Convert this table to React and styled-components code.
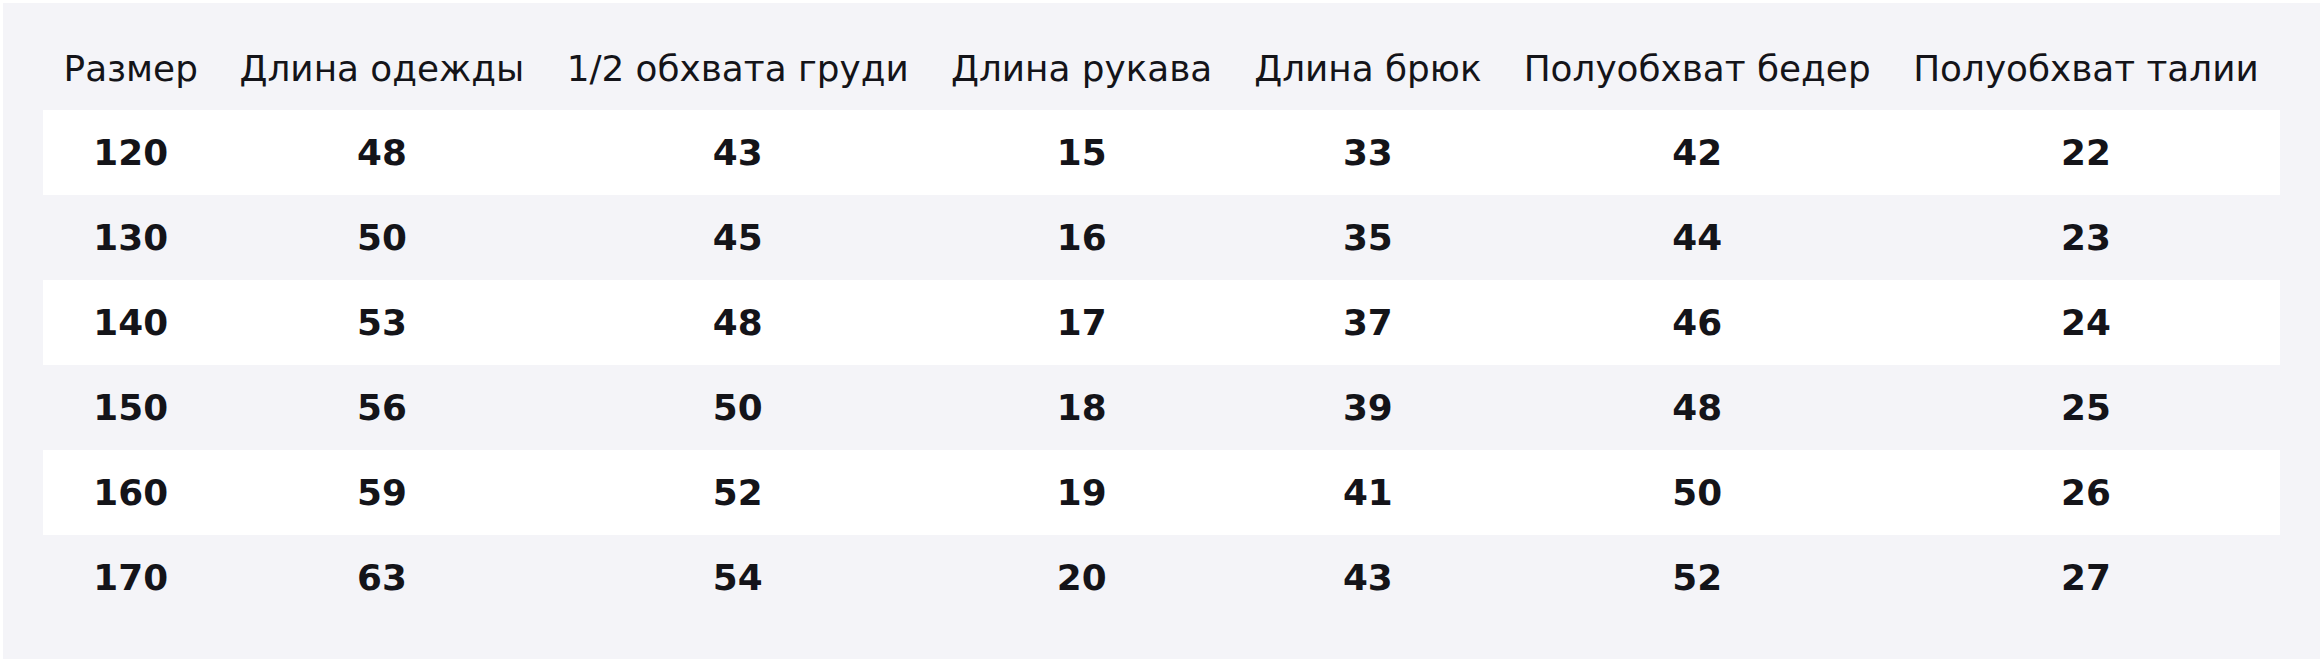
import React from 'react'
import styled, { createGlobalStyle } from 'styled-components'

const GlobalStyle = createGlobalStyle`
  html, body {
    margin: 0;
    padding: 0;
    background: #ffffff;
  }
  body {
    font-family: "DejaVu Sans", "Liberation Sans", sans-serif;
  }
`

const headers = [
  'Размер',
  'Длина одежды',
  '1/2 обхвата груди',
  'Длина рукава',
  'Длина брюк',
  'Полуобхват бедер',
  'Полуобхват талии',
]

const rows = [
  [120, 48, 43, 15, 33, 42, 22],
  [130, 50, 45, 16, 35, 44, 23],
  [140, 53, 48, 17, 37, 46, 24],
  [150, 56, 50, 18, 39, 48, 25],
  [160, 59, 52, 19, 41, 50, 26],
  [170, 63, 54, 20, 43, 52, 27],
]

const SizeChart = () => {
  return (
    <>
      <GlobalStyle />
      <Panel>
        <Table>
          <thead>
            <tr>
              {headers.map((h) => (
                <HeadCell key={h}>{h}</HeadCell>
              ))}
            </tr>
          </thead>
          <tbody>
            {rows.map((row, i) => (
              <Row key={row[0]} $striped={i % 2 === 0}>
                {row.map((v, j) => (
                  <Cell key={j}>{v}</Cell>
                ))}
              </Row>
            ))}
          </tbody>
        </Table>
      </Panel>
    </>
  )
}

const Panel = styled.div`
  margin: 3px;
  padding: 40px 40px 39px;
  background-color: #f4f4f8;
`

const Table = styled.table`
  width: 100%;
  border-collapse: collapse;
  border-spacing: 0;
  color: #141419;
  font-family: "DejaVu Sans", "Liberation Sans", sans-serif;
  font-size: 35.8px;
`

const HeadCell = styled.th`
  font-weight: 400;
  text-align: center;
  white-space: nowrap;
  padding: 5px 20px 21px;
  line-height: normal;
`

const Row = styled.tr`
  height: 85px;
  background-color: ${(p) => (p.$striped ? '#ffffff' : 'transparent')};
`

const Cell = styled.td`
  font-weight: 700;
  text-align: center;
  white-space: nowrap;
  padding: 0 20px;
  vertical-align: middle;
`

export default SizeChart
